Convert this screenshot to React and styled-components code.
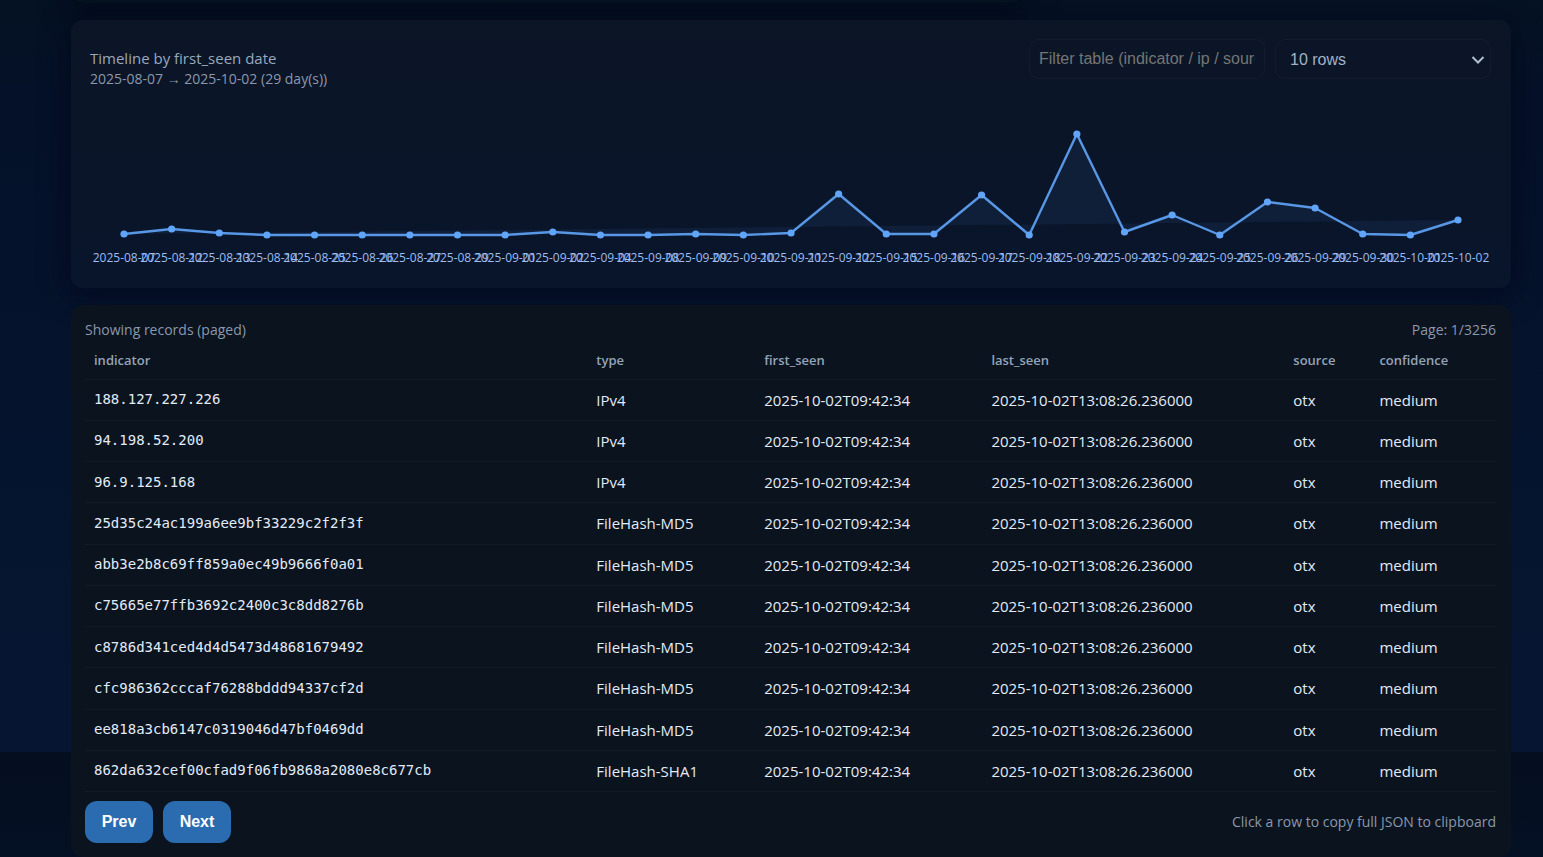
import React, { useState } from "react";
import styled, { createGlobalStyle } from "styled-components";

const UI = `"Open Sans", "Noto Sans", sans-serif`;
const FORM = `"Liberation Sans", Arial, sans-serif`;

const Global = createGlobalStyle`
  * { box-sizing: border-box; }
  body {
    margin: 0;
    background: #030e20;
    color: #e6eef8;
    font-family: ${UI};
    font-size: 15px;
  }
`;

const Page = styled.div`
  background: linear-gradient(180deg, #051223 0, #041129 110px, #061632 752px, #040e1f 752px, #041024 857px);
  overflow: hidden;
`;

const Main = styled.main`
  display: flex;
  flex-direction: column;
  gap: 17px;
  padding: 0 32px 0 71px;
`;

const Card = styled.section`
  border: 1px solid transparent;
  border-radius: 12px;
  background: linear-gradient(180deg, #0b1526, #09152b) border-box;
  box-shadow: 0 6px 30px rgba(2, 6, 23, 0.7);
`;

const Summary = styled(Card)`
  height: 43px;
  margin-top: -40px;
  margin-right: 487px;
  background: #05121f;
`;

const ChartCard = styled(Card)`
  padding: 18px;
`;

const ChartHead = styled.header`
  display: flex;
  justify-content: space-between;
  height: 60px;
`;

const Title = styled.h2`
  margin: 8px 0 0;
  color: #9aa8bc;
  font-size: 15px;
  font-weight: 400;
  line-height: 22px;
`;

const Muted = styled.div`
  color: #8a98ad;
  font-size: 14px;
  line-height: 20px;
`;

const Controls = styled.div`
  display: flex;
  gap: 10px;
  margin-right: 1px;
`;

const Filter = styled.input`
  width: 236px;
  height: 40px;
  padding: 8px 9px;
  border: 1px solid rgba(255, 255, 255, 0.03);
  border-radius: 10px;
  background: transparent;
  color: #e6eef8;
  font: 16px ${FORM};
  &::placeholder { color: #757575; }
`;

const SelectWrap = styled.div`
  position: relative;
  width: 216px;
  height: 40px;
  svg {
    position: absolute;
    right: 6px;
    top: 15px;
    pointer-events: none;
  }
`;

const Select = styled.select`
  appearance: none;
  width: 100%;
  height: 40px;
  padding: 0 14px;
  border: 1px solid rgba(255, 255, 255, 0.03);
  border-radius: 10px;
  background: transparent;
  color: #a3b1c6;
  font: 16px ${FORM};
`;

const Chart = styled.svg`
  display: block;
  width: 100%;
  height: auto;
  overflow: visible;
  text {
    fill: #9dbcf0;
    font-family: ${UI};
    font-size: 12px;
    text-anchor: middle;
  }
`;

const TableCard = styled(Card)`
  padding: 14px 14px 13px 13px;
  background: #0b131e;
  box-shadow: none;
`;

const Bar = styled.div`
  display: flex;
  align-items: center;
  justify-content: space-between;
`;

const Table = styled.table`
  width: 100%;
  border-collapse: collapse;
  table-layout: fixed;
`;

const Col = styled.col`
  width: ${(p) => p.$share}%;
`;

const Th = styled.th`
  height: 39px;
  padding: 1px 9px 0;
  border-bottom: 1px solid rgba(255, 255, 255, 0.03);
  color: #94a3b8;
  font-size: 13px;
  font-weight: 600;
  text-align: left;
`;

const Td = styled.td`
  padding: 10px 9px;
  border-bottom: 1px solid rgba(255, 255, 255, 0.03);
  color: #e2ebf8;
  font-family: ${(p) => (p.$mono ? `"DejaVu Sans Mono", monospace` : UI)};
  font-size: ${(p) => (p.$mono ? 14 : 15)}px;
  line-height: 1.35;
  white-space: nowrap;
`;

const Footer = styled(Bar)`
  margin-top: 9px;
`;

const Pager = styled.div`
  display: flex;
  gap: 10px;
`;

const Button = styled.button`
  width: 68px;
  height: 42px;
  padding: 0;
  border: 0;
  border-radius: 12px;
  background: #2b6cb0;
  color: #fff;
  font: bold 16px ${FORM};
  cursor: pointer;
`;

const DAYS = [
  ["2025-08-07", 135], ["2025-08-12", 130], ["2025-08-13", 134], ["2025-08-14", 136],
  ["2025-08-25", 136], ["2025-08-26", 136], ["2025-08-27", 136], ["2025-08-29", 136],
  ["2025-09-01", 136], ["2025-09-02", 133], ["2025-09-04", 136], ["2025-09-08", 136],
  ["2025-09-09", 135], ["2025-09-10", 136], ["2025-09-11", 134], ["2025-09-12", 95],
  ["2025-09-15", 135], ["2025-09-16", 135], ["2025-09-17", 96], ["2025-09-18", 136],
  ["2025-09-22", 35], ["2025-09-23", 133], ["2025-09-24", 116], ["2025-09-25", 136],
  ["2025-09-26", 103], ["2025-09-29", 109], ["2025-09-30", 135], ["2025-10-01", 136],
  ["2025-10-02", 121],
];

const POINTS = DAYS.map(([day, y], i) => ({ day, y, x: 34 + (i * 1334) / (DAYS.length - 1) }));
const LINE = POINTS.map((p) => `${p.x},${p.y}`).join(" ");

const COLUMNS = [
  ["indicator", 35.6], ["type", 11.9], ["first_seen", 16.1],
  ["last_seen", 21.4], ["source", 6.1], ["confidence", 8.9],
];

const RECORDS = [
  ["188.127.227.226", "IPv4"],
  ["94.198.52.200", "IPv4"],
  ["96.9.125.168", "IPv4"],
  ["25d35c24ac199a6ee9bf33229c2f2f3f", "FileHash-MD5"],
  ["abb3e2b8c69ff859a0ec49b9666f0a01", "FileHash-MD5"],
  ["c75665e77ffb3692c2400c3c8dd8276b", "FileHash-MD5"],
  ["c8786d341ced4d4d5473d48681679492", "FileHash-MD5"],
  ["cfc986362cccaf76288bddd94337cf2d", "FileHash-MD5"],
  ["ee818a3cb6147c0319046d47bf0469dd", "FileHash-MD5"],
  ["862da632cef00cfad9f06fb9868a2080e8c677cb", "FileHash-SHA1"],
];

export default function App() {
  const [filter, setFilter] = useState("");
  return (
    <Page>
      <Global />
      <Main>
        <Summary />
        <ChartCard>
          <ChartHead>
            <div>
              <Title>Timeline by first_seen date</Title>
              <Muted>2025-08-07 → 2025-10-02 (29 day(s))</Muted>
            </div>
            <Controls>
              <Filter
                aria-label="Filter table"
                placeholder="Filter table (indicator / ip / source)"
                value={filter}
                onChange={(e) => setFilter(e.target.value)}
              />
              <SelectWrap>
                <Select aria-label="Rows per page" defaultValue="10">
                  <option value="10">10 rows</option>
                  <option value="25">25 rows</option>
                  <option value="50">50 rows</option>
                </Select>
                <svg width="14" height="12" viewBox="0 0 14 12" fill="none" stroke="#b4bfce" strokeWidth="2">
                  <path d="M1.5 3 7 8.5 12.5 3" />
                </svg>
              </SelectWrap>
            </Controls>
          </ChartHead>
          <Chart viewBox="0 0 1402 170" role="img" aria-label="Records per day">
            <polygon points={LINE} fill="#60a5fa" fillOpacity="0.07" />
            <polyline points={LINE} fill="none" stroke="#60a5fa" strokeOpacity="0.9" strokeWidth="2.4" strokeLinejoin="round" />
            {POINTS.map((p) => (
              <g key={p.day}>
                <circle cx={p.x} cy={p.y} r="3.6" fill="#60a5fa" />
                <text x={p.x} y="163">{p.day}</text>
              </g>
            ))}
          </Chart>
        </ChartCard>
        <TableCard>
          <Bar>
            <Muted>Showing records (paged)</Muted>
            <Muted>Page: 1/3256</Muted>
          </Bar>
          <Table>
            <colgroup>
              {COLUMNS.map(([name, share]) => <Col key={name} $share={share} />)}
            </colgroup>
            <thead>
              <tr>{COLUMNS.map(([name]) => <Th key={name} scope="col">{name}</Th>)}</tr>
            </thead>
            <tbody>
              {RECORDS.map(([indicator, type]) => (
                <tr key={indicator}>
                  <Td $mono>{indicator}</Td>
                  <Td>{type}</Td>
                  <Td>2025-10-02T09:42:34</Td>
                  <Td>2025-10-02T13:08:26.236000</Td>
                  <Td>otx</Td>
                  <Td>medium</Td>
                </tr>
              ))}
            </tbody>
          </Table>
          <Footer>
            <Pager>
              <Button type="button">Prev</Button>
              <Button type="button">Next</Button>
            </Pager>
            <Muted>Click a row to copy full JSON to clipboard</Muted>
          </Footer>
        </TableCard>
      </Main>
    </Page>
  );
}
